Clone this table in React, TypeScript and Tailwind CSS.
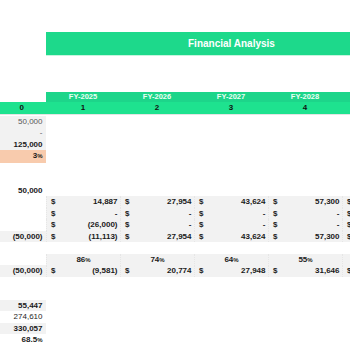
const GRID = "grid grid-cols-[46px_74px_74px_74px_74px_74px]";
const FONT = "font-['Liberation_Sans',Arial,sans-serif]";

type Row = {
  c0?: string;
  c0Cls?: string;
  c0Bg?: string;
  cells?: string[];
  pct?: string[];
  bg?: boolean;
};

const ROWS: Row[] = [
  { c0: "50,000", c0Cls: "text-[#595959]", c0Bg: "bg-[#f2f2f2]" },
  { c0: "-", c0Cls: "text-[#595959]", c0Bg: "bg-[#f2f2f2]" },
  { c0: "125,000", c0Cls: "font-bold", c0Bg: "bg-[#f2f2f2]" },
  { c0: "3%", c0Cls: "font-bold", c0Bg: "bg-[#f8cbad]" },
  {},
  {},
  { c0: "50,000", c0Cls: "font-bold" },
  { cells: ["14,887", "27,954", "43,624", "57,300", ""], bg: true },
  { cells: ["-", "-", "-", "-", ""], bg: true },
  { cells: ["(26,000)", "-", "-", "-", ""], bg: true },
  { c0: "(50,000)", c0Cls: "font-bold", c0Bg: "bg-[#f2f2f2]", cells: ["(11,113)", "27,954", "43,624", "57,300", ""], bg: true },
  {},
  { pct: ["86", "74", "64", "55"], bg: true },
  { c0: "(50,000)", c0Cls: "font-bold", c0Bg: "bg-[#f2f2f2]", cells: ["(9,581)", "20,774", "27,948", "31,646", ""], bg: true },
  {},
  {},
  { c0: "55,447", c0Cls: "font-bold", c0Bg: "bg-[#f2f2f2]" },
  { c0: "274,610", c0Cls: "text-[#262626]" },
  { c0: "330,057", c0Cls: "font-bold", c0Bg: "bg-[#f2f2f2]" },
  { c0: "68.5%", c0Cls: "font-bold" },
];

function Pct({ v }: { v: string }) {
  return (
    <span>
      {v}
      <span className="text-[6px]">%</span>
    </span>
  );
}

function SheetRow({ row }: { row: Row }) {
  const c0 = row.c0 ?? "";
  const pctIdx = c0.endsWith("%") ? c0.slice(0, -1) : null;
  return (
    <div className={GRID + " h-[11.5px] text-[8px] leading-[11.5px] text-[#1a1a1a]"}>
      <div className={"pr-[3.5px] text-right " + (row.c0Bg ?? "") + " " + (row.c0Cls ?? "")}>
        {pctIdx !== null ? <Pct v={pctIdx} /> : c0}
      </div>
      {[0, 1, 2, 3, 4].map((i) => {
        const bg = row.bg ? "bg-[#f2f2f2] border-l border-dotted border-l-[#e6e6e6]" : "";
        if (row.cells) {
          return (
            <div key={i} className={"flex justify-between pl-[4px] pr-[2.5px] font-bold " + bg}>
              <span>$</span>
              <span>{row.cells[i]}</span>
            </div>
          );
        }
        if (row.pct) {
          return (
            <div key={i} className={"text-center font-bold " + bg}>
              {row.pct[i] ? <Pct v={row.pct[i]} /> : ""}
            </div>
          );
        }
        return <div key={i} />;
      })}
    </div>
  );
}

export default function App() {
  return (
    <div className={"h-[350px] w-[350px] overflow-hidden bg-white " + FONT}>
      <div className="w-[416px]">
        <div className="h-[32px]" />
        {/* Title banner */}
        <div className="ml-[46px] flex h-[24px] items-center border-b border-[#c6f5de] bg-[#1dd98b] pl-[142px] text-[10px] font-bold text-white">
          Financial Analysis
        </div>
        <div className="h-[36px]" />

        {/* Year header */}
        <div className={GRID + " h-[9.5px] text-[7.5px] font-bold leading-[9.5px] text-[#eafff4]"}>
          <div />
          {["FY-2025", "FY-2026", "FY-2027", "FY-2028", ""].map((y, i) => (
            <div key={i} className="bg-[#1dd58a] text-center">
              {y}
            </div>
          ))}
        </div>
        <div className={GRID + " h-[12px] bg-[#1ee28f] text-[8px] font-bold leading-[12px] text-[#111]"}>
          <div className="pr-[22px] text-right">0</div>
          {["1", "2", "3", "4", ""].map((n, i) => (
            <div key={i} className="text-center">
              {n}
            </div>
          ))}
        </div>
        <div className="h-[2px] border-t border-[#e4e4e4]" />

        {ROWS.map((r, i) => (
          <SheetRow key={i} row={r} />
        ))}
      </div>
    </div>
  );
}
